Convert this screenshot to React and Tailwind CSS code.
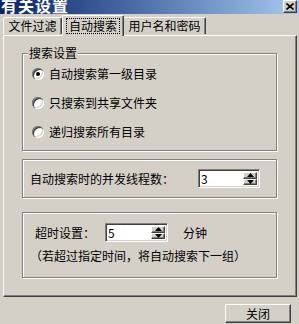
import React from 'react';

// classic win9x style 3d edges
const raised = 'border border-t-white border-l-white border-r-[#404040] border-b-[#404040] shadow-[inset_-1px_-1px_0_#808080]';
const sunken = 'border border-t-[#808080] border-l-[#808080] border-r-white border-b-white shadow-[inset_1px_1px_0_#404040,inset_-1px_-1px_0_#d4d0c8]';
const etched = 'border border-[#808080] shadow-[1px_1px_0_#fff,inset_1px_1px_0_#fff]';

const Radio = ({ checked, label }) => (
  <div className="flex items-center h-[14px]">
    <span className="w-[12px] h-[12px] rounded-full bg-white flex items-center justify-center shadow-[inset_1px_1px_0_#808080,inset_2px_2px_0_#404040,inset_-1px_-1px_0_#fff,inset_-2px_-2px_0_#d4d0c8]">
      {checked && <span className="w-[4px] h-[4px] rounded-full bg-black" />}
    </span>
    <span className="ml-[5px]">{label}</span>
  </div>
);

const Spin = ({ value, className }) => (
  <div className={`flex h-[19px] bg-white ${sunken} ${className}`}>
    <span className="flex-1 pl-[2px] leading-[17px] text-[12px]">{value}</span>
    <div className="flex flex-col w-[16px] py-[2px] pr-[2px]">
      <div className={`flex-1 bg-[#d4d0c8] flex items-center justify-center ${raised}`}>
        <svg width="7" height="4" viewBox="0 0 7 4"><path d="M3.5 0L7 4H0z" fill="#000" /></svg>
      </div>
      <div className={`flex-1 bg-[#d4d0c8] flex items-center justify-center ${raised}`}>
        <svg width="7" height="4" viewBox="0 0 7 4"><path d="M0 0h7L3.5 4z" fill="#000" /></svg>
      </div>
    </div>
  </div>
);

export default function App() {
  return (
    <div
      className="w-[299px] h-[324px] bg-[#d4d0c8] overflow-hidden flex flex-col text-[12px] text-black"
      style={{ fontFamily: '"Noto Sans CJK SC", "Liberation Sans", sans-serif' }}
    >
      {/* title bar */}
      <div className="h-[14px] shrink-0 flex justify-between bg-gradient-to-r from-[#0a246a] to-[#a6caf0] overflow-hidden">
        <span className="pl-[1px] -mt-[5px] text-white font-bold text-[16px] leading-[20px] tracking-[1px]">有关设置</span>
        <div className={`w-[14px] h-[13px] mr-[2px] bg-[#d4d0c8] flex items-center justify-center ${raised}`}>
          <svg width="8" height="7" viewBox="0 0 8 7"><path d="M0.5 0.5L7.5 6.5M7.5 0.5L0.5 6.5" stroke="#000" strokeWidth="1.6" /></svg>
        </div>
      </div>

      {/* tabs */}
      <div className="h-[21px] shrink-0 flex items-end pl-[3px] relative z-10">
        <div className="w-[59px] h-[17px] mb-[1px] flex items-center justify-center border-t border-l border-white border-r border-r-[#404040] shadow-[inset_-1px_0_0_#808080] rounded-t-[2px]">
          文件过滤
        </div>
        <div className="w-[62px] h-[21px] -mb-[1px] bg-[#d4d0c8] flex items-center justify-center border-t border-l border-white border-r border-r-[#404040] shadow-[inset_-1px_0_0_#808080] rounded-t-[2px]">
          <span className="border border-dotted border-black px-[2px] leading-[14px]">自动搜索</span>
        </div>
        <div className="w-[82px] h-[17px] mb-[1px] flex items-center justify-center border-t border-white border-r border-r-[#404040] shadow-[inset_-1px_0_0_#808080] rounded-t-[2px]">
          用户名和密码
        </div>
      </div>

      {/* panel */}
      <div className={`ml-[3px] w-[294px] h-[262px] shrink-0 px-[18px] pt-[17px] ${raised}`}>
        <div className={`relative h-[98px] w-[255px] ${etched} flex flex-col pl-[9px] pt-[13px] gap-[15px]`}>
          <span className="absolute -top-[8px] left-[5px] px-[1px] bg-[#d4d0c8] leading-[14px]">搜索设置</span>
          <Radio checked label="自动搜索第一级目录" />
          <Radio label="只搜索到共享文件夹" />
          <Radio label="递归搜索所有目录" />
        </div>

        <div className={`mt-[8px] h-[39px] w-[255px] ${etched} flex items-center pl-[7px]`}>
          <span className="w-[168px]">自动搜索时的并发线程数：</span>
          <Spin value="3" className="w-[62px]" />
        </div>

        <div className={`mt-[14px] h-[66px] w-[255px] ${etched} flex flex-col pl-[7px] pt-[10px]`}>
          <div className="flex items-center">
            <span className="w-[75px] pl-[5px]">超时设置：</span>
            <Spin value="5" className="w-[63px]" />
            <span className="ml-[15px]">分钟</span>
          </div>
          <div className="mt-[6px] leading-[16px]">（若超过指定时间，将自动搜索下一组）</div>
        </div>
      </div>

      {/* bottom button */}
      <div className="flex justify-end pr-[8px] mt-[7px]">
        <div className={`w-[66px] h-[19px] flex items-center justify-center ${raised}`}>关闭</div>
      </div>
    </div>
  );
}
